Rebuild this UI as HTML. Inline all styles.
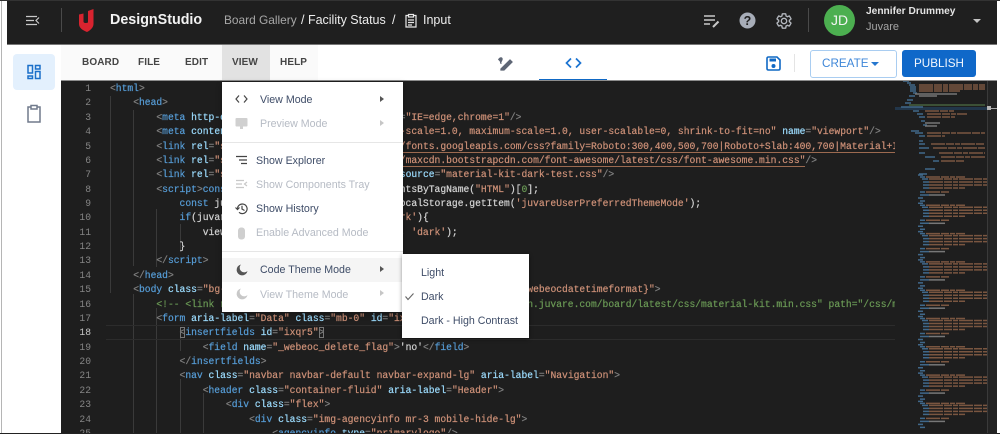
<!DOCTYPE html>
<html><head><meta charset="utf-8">
<style>
html,body{margin:0;padding:0;background:#fff;height:434px;overflow:hidden}
body{width:1000px;position:relative;font-family:"Liberation Sans",sans-serif}
.a{position:absolute;white-space:nowrap}
#code{position:absolute;left:61px;top:81px;width:936px;height:352px;background:#1e1e1e;overflow:hidden}
.l{position:absolute;left:49px;width:785px;height:14px;overflow:hidden;font:9.67px/14px "Liberation Mono",monospace;color:#d4d4d4;white-space:pre;-webkit-text-stroke:.2px currentColor}
.n{position:absolute;left:0;width:30px;height:14px;overflow:hidden;text-align:right;font:9.67px/14px "Liberation Mono",monospace;color:#858585}
.g{color:#808080}.t{color:#569cd6}.p{color:#9cdcfe}.s{color:#ce9178}.c{color:#6a9955}.k{color:#569cd6}
.u{border-bottom:1px solid #9c6a50}
.gd{position:absolute;width:1px;background:#3a3a3a}
.m{position:absolute;font-size:10.65px;color:#3f4d68;white-space:nowrap}
.d{color:#b6bbc4}
.tb{position:absolute;top:57px;font-size:10px;font-weight:bold;color:#454545;letter-spacing:.1px}
.tri{position:absolute;width:0;height:0;border-left:4px solid #555;border-top:3.5px solid transparent;border-bottom:3.5px solid transparent}
</style></head><body>

<div class="a" style="left:1px;top:0;width:1px;height:434px;background:#b5b5b5"></div>
<div class="a" style="left:7px;top:0;width:990px;height:44px;background:#1f1f1f"></div>
<div class="a" style="left:0;top:0;width:1000px;height:1px;background:#333"></div>
<div class="a" style="left:7px;top:44px;width:990px;height:1px;background:#777"></div>

<svg class="a" style="left:25px;top:14px" width="15" height="13" viewBox="0 0 15 13"><path d="M1 2.500H12M1 6.500H9M1 10.500H12M14 3.500L11 6.500L14 9.500" fill="none" stroke="#c9c9c9" stroke-width="1.200"/></svg>
<div class="a" style="left:61px;top:8px;width:1px;height:24px;background:#4a4a4a"></div>
<svg class="a" style="left:78px;top:8px" width="17" height="25" viewBox="0 0 17 25"><path d="M1 6.500L5.500 5.500V14C6 15 8 15.500 10 14.500V3L15.500 1V16C15.500 19 13 22 9 24C5 22.500 1 20 1 16Z" fill="#d8232f"/></svg>
<div class="a" style="left:110px;top:12px;font-size:14.3px;font-weight:bold;color:#f2f2f2">DesignStudio</div>
<div class="a" style="left:224px;top:13px;font-size:11.9px;color:#a8a8a8">Board Gallery</div>
<div class="a" style="left:301px;top:13px;font-size:12.5px;color:#ededed">/ Facility Status</div>
<div class="a" style="left:392px;top:13px;font-size:12.5px;color:#ededed">/</div>
<svg class="a" style="left:404px;top:13px" width="14" height="15" viewBox="0 0 14 15"><path d="M4.500 2.500H2V14H12V2.500H9.500M4.500 1.500H9.500V4H4.500ZM4 7H10M4 9.500H10M4 12H8" fill="none" stroke="#e8e8e8" stroke-width="1.200"/></svg>
<div class="a" style="left:423px;top:13px;font-size:12.5px;color:#ededed">Input</div>

<svg class="a" style="left:703px;top:14px" width="17" height="14" viewBox="0 0 17 14"><path d="M1 2H12M1 6H12M1 10H7" stroke="#c8c8c8" stroke-width="1.400"/><path d="M10 13L15.500 7.500" stroke="#c8c8c8" stroke-width="2"/></svg>
<svg class="a" style="left:739px;top:12px" width="17" height="17" viewBox="0 0 17 17"><circle cx="8.500" cy="8.500" r="8" fill="#a7adb8"/><text x="8.500" y="13" font-family="Liberation Sans" font-size="12.500" font-weight="bold" text-anchor="middle" fill="#1f1f1f">?</text></svg>
<svg class="a" style="left:775px;top:12px" width="18" height="18" viewBox="0 0 24 24"><path d="M19.140 12.940c.04-.3.06-.61.06-.94 0-.32-.02-.64-.07-.94l2.030-1.580c.18-.14.23-.41.12-.61l-1.920-3.320c-.12-.22-.37-.29-.59-.22l-2.390.96c-.5-.38-1.030-.7-1.620-.94l-.36-2.540c-.04-.24-.24-.41-.48-.41h-3.840c-.24 0-.43.17-.47.41l-.36 2.540c-.59.24-1.130.57-1.620.94l-2.390-.96c-.22-.08-.47 0-.59.22L2.740 8.870c-.12.21-.08.47.12.61l2.030 1.580c-.05.3-.09.63-.09.94s.02.64.07.94l-2.030 1.580c-.18.14-.23.41-.12.61l1.920 3.320c.12.22.37.29.59.22l2.390-.96c.5.38 1.030.7 1.620.94l.36 2.540c.05.24.24.41.48.41h3.840c.24 0 .44-.17.47-.41l.36-2.540c.59-.24 1.130-.56 1.620-.94l2.390.96c.22.08.47 0 .59-.22l1.920-3.320c.12-.22.07-.47-.12-.61l-2.010-1.580zM12 15.600c-1.980 0-3.600-1.620-3.600-3.600s1.620-3.600 3.600-3.600 3.600 1.620 3.600 3.600-1.620 3.600-3.600 3.600z" fill="none" stroke="#b4b8bf" stroke-width="1.800"/></svg>
<div class="a" style="left:808px;top:8px;width:1px;height:24px;background:#4a4a4a"></div>
<div class="a" style="left:824px;top:5px;width:31px;height:31px;border-radius:50%;background:#4caf50;color:#f4f4f4;font-size:14px;line-height:31px;text-align:center">JD</div>
<div class="a" style="left:866px;top:6px;font-size:10.2px;font-weight:bold;color:#e4e4e4">Jennifer Drummey</div>
<div class="a" style="left:866px;top:21px;font-size:11px;color:#a5a5a5">Juvare</div>
<div class="a" style="left:973px;top:19px;width:0;height:0;border-top:4px solid #c4c4c4;border-left:4px solid transparent;border-right:4px solid transparent"></div>

<div class="a" style="left:13px;top:54px;width:42px;height:36px;border-radius:4px;background:#e3f0fd"></div>
<svg class="a" style="left:26px;top:64px" width="16" height="16" viewBox="0 0 16 16"><path d="M2 1.500H6.500V9H2ZM9.500 1.500H14V5H9.500ZM2 12H6.500V14.500H2ZM9.500 7.500H14V14.500H9.500Z" fill="none" stroke="#1a6fc9" stroke-width="1.500"/></svg>
<svg class="a" style="left:26px;top:104px" width="16" height="19" viewBox="0 0 16 19"><path d="M4.500 3H2V18H14V3H11.500M5 1.500H11V5H5Z" fill="none" stroke="#707a8c" stroke-width="1.500"/></svg>

<div class="a" style="left:61px;top:45px;width:936px;height:36px;background:#fff"></div>
<div class="a" style="left:61px;top:45px;width:257px;height:36px;background:#fafafa"></div>
<div class="a" style="left:222px;top:45px;width:48px;height:36px;background:#e2e2e2"></div>
<div class="tb" style="left:82px">BOARD</div>
<div class="tb" style="left:138px">FILE</div>
<div class="tb" style="left:185px">EDIT</div>
<div class="tb" style="left:232px">VIEW</div>
<div class="tb" style="left:280px">HELP</div>
<svg class="a" style="left:497px;top:56px" width="16" height="15" viewBox="0 0 16 15"><path d="M4 13L13 4L15 6L7 14H4ZM1.500 4C3 1 5.500 1.500 5 3.500S2.500 7 4.500 7.500" fill="#5e6675" stroke="#5e6675" stroke-width="1.300"/></svg>
<svg class="a" style="left:565px;top:57px" width="17" height="12" viewBox="0 0 17 12"><path d="M6 1.500L1.500 6L6 10.500M11 1.500L15.500 6L11 10.500" fill="none" stroke="#1a73d1" stroke-width="1.700"/></svg>
<div class="a" style="left:539px;top:79px;width:68px;height:2px;background:#0f68c4"></div>
<svg class="a" style="left:766px;top:56px" width="15" height="15" viewBox="0 0 15 15"><path d="M1 2.500C1 1.500 1.500 1 2.500 1H11L14 4V12.500C14 13.500 13.500 14 12.500 14H2.500C1.500 14 1 13.500 1 12.500Z" fill="none" stroke="#0f68c4" stroke-width="1.600"/><path d="M3.500 2.500H10V5.500H3.500Z" fill="#0f68c4"/><circle cx="7.500" cy="10" r="2" fill="#0f68c4"/></svg>
<div class="a" style="left:794px;top:54px;width:1px;height:18px;background:#e4e4e4"></div>
<div class="a" style="left:810px;top:50px;width:85px;height:26px;border:1px solid #a9cdf1;border-radius:3px;background:#fff"></div>
<div class="a" style="left:822px;top:57px;font-size:11.7px;color:#3f87d8">CREATE</div>
<div class="a" style="left:871px;top:62px;width:0;height:0;border-top:4px solid #2577cf;border-left:4px solid transparent;border-right:4px solid transparent"></div>
<div class="a" style="left:902px;top:50px;width:74px;height:27px;border-radius:3px;background:#0f68c9;color:#f2f7fd;font-size:11.7px;line-height:27px;text-align:center">PUBLISH</div>
<div class="a" style="left:61px;top:80px;width:936px;height:1px;background:#8d8d8d"></div>

<div id="code">
<div class="gd" style="left:49px;top:15px;height:197px"></div>
<div class="gd" style="left:72px;top:29px;height:156px"></div>
<div class="gd" style="left:72px;top:213px;height:139px"></div>
<div class="gd" style="left:95px;top:128px;height:58px"></div>
<div class="gd" style="left:95px;top:227px;height:125px"></div>
<div class="gd" style="left:119px;top:143px;height:28px"></div>
<div class="gd" style="left:119px;top:256px;height:14px"></div>
<div class="gd" style="left:119px;top:298px;height:54px"></div>
<div class="gd" style="left:142px;top:312px;height:40px"></div>
<div class="a" style="left:45px;top:244px;width:789px;height:13px;border-top:1px solid #2c2c2c;border-bottom:1px solid #2c2c2c"></div>

<div class="n" style="top:1px">1</div><div class="n" style="top:15.4px">2</div><div class="n" style="top:29.7px">3</div><div class="n" style="top:44.1px">4</div><div class="n" style="top:58.5px">5</div><div class="n" style="top:72.9px">6</div><div class="n" style="top:87.2px">7</div><div class="n" style="top:101.6px">8</div><div class="n" style="top:116px">9</div><div class="n" style="top:130.3px">10</div><div class="n" style="top:144.7px">11</div><div class="n" style="top:159.1px">12</div><div class="n" style="top:173.4px">13</div><div class="n" style="top:187.8px">14</div><div class="n" style="top:202.2px">15</div><div class="n" style="top:216.6px">16</div><div class="n" style="top:230.9px">17</div><div class="n" style="top:245.3px;color:#c6c6c6">18</div><div class="n" style="top:259.7px">19</div><div class="n" style="top:274px">20</div><div class="n" style="top:288.4px">21</div><div class="n" style="top:302.8px">22</div><div class="n" style="top:317.1px">23</div><div class="n" style="top:331.5px">24</div>

<div class="l" style="top:1px"><span class="g">&lt;</span><span class="t">html</span><span class="g">&gt;</span></div>
<div class="l" style="top:15.4px">    <span class="g">&lt;</span><span class="t">head</span><span class="g">&gt;</span></div>
<div class="l" style="top:29.7px">        <span class="g">&lt;</span><span class="t">meta</span> <span class="p">http-equiv</span><span class="g">=</span><span class="s">"X-UA-Compatible"</span> <span class="p">content</span><span class="g">=</span><span class="s">"IE=edge,chrome=1"</span><span class="g">/&gt;</span></div>
<div class="l" style="top:44.1px">        <span class="g">&lt;</span><span class="t">meta</span> <span class="p">content</span><span class="g">=</span><span class="s">"width=device-width, initial-scale=1.0, maximum-scale=1.0, user-scalable=0, shrink-to-fit=no"</span> <span class="p">name</span><span class="g">=</span><span class="s">"viewport"</span><span class="g">/&gt;</span></div>
<div class="l" style="top:58.5px">        <span class="g">&lt;</span><span class="t">link</span> <span class="p">rel</span><span class="g">=</span><span class="s">"stylesheet"</span> <span class="p">source</span><span class="g">=</span><span class="s u">"https://////fonts.googleapis.com/css?family=Roboto:300,400,500,700|Roboto+Slab:400,700|Material+Icons"</span></div>
<div class="l" style="top:72.9px">        <span class="g">&lt;</span><span class="t">link</span> <span class="p">rel</span><span class="g">=</span><span class="s">"stylesheet"</span> <span class="p">source</span><span class="g">=</span><span class="s u">"https://////maxcdn.bootstrapcdn.com/font-awesome/latest/css/font-awesome.min.css"</span><span class="g">/&gt;</span></div>
<div class="l" style="top:87.2px">        <span class="g">&lt;</span><span class="t">link</span> <span class="p">rel</span><span class="g">=</span><span class="s">"stylesheet"</span>                    <span class="p">source</span><span class="g">=</span><span class="s">"material-kit-dark-test.css"</span><span class="g">/&gt;</span></div>
<div class="l" style="top:101.6px">        <span class="g">&lt;</span><span class="t">script</span><span class="g">&gt;</span><span class="k">const</span> htmlElem = document.getElementsByTagName(<span class="s">"HTML"</span>)[<span class="c">0</span>];</div>
<div class="l" style="top:116px">            <span class="k">const</span> juvareUserPreferredThemeMode = localStorage.getItem(<span class="s">'juvareUserPreferredThemeMode'</span>);</div>
<div class="l" style="top:130.3px">            <span class="k">if</span>(juvareUserPreferredThemeMode == <span class="s">'dark'</span>){</div>
<div class="l" style="top:144.7px">                viewElem.setAttribute(<span class="s">'data-theme'</span>, <span class="s">'dark'</span>);</div>
<div class="l" style="top:159.1px">            }</div>
<div class="l" style="top:173.4px">        <span class="g">&lt;/</span><span class="t">script</span><span class="g">&gt;</span></div>
<div class="l" style="top:187.8px">    <span class="g">&lt;/</span><span class="t">head</span><span class="g">&gt;</span></div>
<div class="l" style="top:202.2px">    <span class="g">&lt;</span><span class="t">body</span> <span class="p">class</span><span class="g">=</span><span class="s">"bg-dark"</span> <span class="p">data-format</span><span class="g">=</span><span class="s">"{webeoc-date-time-format-value-v_webeocdatetimeformat}"</span><span class="g">&gt;</span></div>
<div class="l" style="top:216.6px">        <span class="c">&lt;!-- &lt;link rel="stylesheet" type="text/css"     href="https://cdn.juvare.com/board/latest/css/material-kit.min.css" path="/css/material-kit.min.css"/&gt; --&gt;</span></div>
<div class="l" style="top:230.9px">        <span class="g">&lt;</span><span class="t">form</span> <span class="p">aria-label</span><span class="g">=</span><span class="s">"Data"</span> <span class="p">class</span><span class="g">=</span><span class="s">"mb-0"</span> <span class="p">id</span><span class="g">=</span><span class="s">"ixqr4"</span><span class="g">&gt;</span></div>
<div class="l" style="top:245.3px">            <span class="g" style="outline:1px solid #777;outline-offset:-1px">&lt;</span><span class="t">insertfields</span> <span class="p">id</span><span class="g">=</span><span class="s">"ixqr5"</span><span class="g" style="outline:1px solid #777;outline-offset:-1px">&gt;</span></div>
<div class="l" style="top:259.7px">                <span class="g">&lt;</span><span class="t">field</span> <span class="p">name</span><span class="g">=</span><span class="s">"_webeoc_delete_flag"</span><span class="g">&gt;</span>'no'<span class="g">&lt;/</span><span class="t">field</span><span class="g">&gt;</span></div>
<div class="l" style="top:274px">            <span class="g">&lt;/</span><span class="t">insertfields</span><span class="g">&gt;</span></div>
<div class="l" style="top:288.4px">            <span class="g">&lt;</span><span class="t">nav</span> <span class="p">class</span><span class="g">=</span><span class="s">"navbar navbar-default navbar-expand-lg"</span> <span class="p">aria-label</span><span class="g">=</span><span class="s">"Navigation"</span><span class="g">&gt;</span></div>
<div class="l" style="top:302.8px">                <span class="g">&lt;</span><span class="t">header</span> <span class="p">class</span><span class="g">=</span><span class="s">"container-fluid"</span> <span class="p">aria-label</span><span class="g">=</span><span class="s">"Header"</span><span class="g">&gt;</span></div>
<div class="l" style="top:317.1px">                    <span class="g">&lt;</span><span class="t">div</span> <span class="p">class</span><span class="g">=</span><span class="s">"flex"</span><span class="g">&gt;</span></div>
<div class="l" style="top:331.5px">                        <span class="g">&lt;</span><span class="t">div</span> <span class="p">class</span><span class="g">=</span><span class="s">"img-agencyinfo mr-3 mobile-hide-lg"</span><span class="g">&gt;</span></div>
<div class="a" style="left:0;top:345.9px;width:834px;height:6.1px;overflow:hidden">
<div class="n" style="top:0">25</div>
<div class="l" style="top:0">                            <span class="g">&lt;</span><span class="t">agencyinfo</span> <span class="p">type</span><span class="g">=</span><span class="s">"primarylogo"</span><span class="g">/&gt;</span></div>
</div>

<svg class="a" style="left:834px;top:0;overflow:hidden" width="102" height="352" viewBox="0 0 102 352">
<defs>
<filter id="bl" x="-5%" y="-5%" width="110%" height="110%"><feGaussianBlur stdDeviation="0.35"/></filter>
<g id="mb" fill="none" stroke-width="1.500">
<path d="M23 0H28M25 2H30M27 4H33M28 7H34M28 10H34M28 13H34M25 17H30M25 20H34M23 23H28M25 26H30" stroke="#40688a"/>
<path d="M31 2H70M34 4H92M34 7H92M34 10H92M34 13H70M31 17H55" stroke="#7a5640" stroke-dasharray="14 1 8 1 5 1"/>
<path d="M34 20H50" stroke="#777"/>
</g>
</defs>
<rect x="0" y="26" width="92" height="3" fill="#22364a"/>
<rect x="92" y="0" width="10" height="352" fill="#232323"/>
<rect x="92" y="0" width="1" height="352" fill="#3a3a3a"/>
<g filter="url(#bl)">
<g fill="none" stroke-width="1.500">
<path d="M8 0H14M12 2H16M14 4H20M15 6H21M15 8H21M15 10H21M18 12H22M14 15H20M12 19H18M10 22H16M6 26H28M18 30H24M22 33H28M24 36H30M26 40H30M28 44H32M16 50H24M20 52H28M24 55H30M24 60H28M24 63H30M24 67H34M24 72H30M30 76H40M38 80H44M30 88H40M24 93H32" stroke="#40688a"/>
<path d="M24 4H90M24 6H90M24 8H90M24 10H65M30 30H60M32 33H72M32 36H60M32 52H90M32 55H50M36 63H90M38 67H90M44 72H90M46 76H90M46 80H70" stroke="#7a5640" stroke-dasharray="14 1 8 1 5 1"/>
<path d="M20 13H62M24 15H42M30 42H45M30 45H42" stroke="#777"/>
<path d="M14 24H90" stroke="#47603d"/>
</g>
<use href="#mb" y="94"/><use href="#mb" y="122.300"/><use href="#mb" y="150.600"/><use href="#mb" y="178.900"/><use href="#mb" y="207.200"/><use href="#mb" y="235.500"/><use href="#mb" y="263.800"/><use href="#mb" y="292.100"/><use href="#mb" y="320.400"/>
</g>
<rect x="96" y="27" width="6" height="1" fill="#aaa"/>
<rect x="92" y="25" width="4" height="4" fill="#b5b5b5"/>
</svg>
</div>

<div class="a" style="left:222px;top:82px;width:181px;height:230px;background:#fff;box-shadow:0 2px 6px rgba(0,0,0,.3)"></div>
<div class="a" style="left:222px;top:142px;width:181px;height:1px;background:#e6e6e6"></div>
<div class="a" style="left:222px;top:251px;width:181px;height:1px;background:#e6e6e6"></div>
<div class="a" style="left:222px;top:258px;width:181px;height:24px;background:#f5f5f5"></div>

<svg class="a" style="left:235px;top:94px" width="13" height="10" viewBox="0 0 13 10"><path d="M4 1.500L1 5L4 8.500M9 1.500L12 5L9 8.500" fill="none" stroke="#444" stroke-width="1.200"/></svg>
<div class="m" style="left:260px;top:94px">View Mode</div>
<div class="tri" style="left:380px;top:96px"></div>
<svg class="a" style="left:235px;top:118px" width="13" height="12" viewBox="0 0 13 12"><rect x="0.500" y="0" width="12" height="8.500" rx="1" fill="#d0d0d0"/><rect x="5" y="8.500" width="3" height="2.500" fill="#d0d0d0"/></svg>
<div class="m d" style="left:260px;top:118px">Preview Mode</div>
<div class="tri" style="left:380px;top:120px;border-left-color:#c6c6c6"></div>

<svg class="a" style="left:235px;top:155px" width="13" height="11" viewBox="0 0 13 11"><path d="M1 1.500H12M4 5H12M6 8.500H12" stroke="#444" stroke-width="1.300"/></svg>
<div class="m" style="left:256px;top:155px">Show Explorer</div>
<svg class="a" style="left:235px;top:179px" width="13" height="11" viewBox="0 0 13 11"><path d="M1 1.500H9M1 5H7M1 8.500H9M12 3L9.500 5L12 7" fill="none" stroke="#c8c8c8" stroke-width="1.200"/></svg>
<div class="m d" style="left:256px;top:179px">Show Components Tray</div>
<svg class="a" style="left:235px;top:202px" width="13" height="13" viewBox="0 0 13 13"><path d="M2.500 6.500A4.800 4.800 0 1 1 4 10.300M0.500 5.500L2.500 7.500L4.500 5.500M7 3.800V7L9.500 8.500" fill="none" stroke="#444" stroke-width="1.200"/></svg>
<div class="m" style="left:256px;top:203px">Show History</div>
<svg class="a" style="left:236px;top:226px" width="11" height="14" viewBox="0 0 11 14"><path d="M2 5C2 2 4 1.500 5.500 1.500S9 2 9 5V10C9 12.500 7.500 13.500 5.500 13.500S2 12.500 2 10Z" fill="#cfcfcf"/></svg>
<div class="m d" style="left:256px;top:227px">Enable Advanced Mode</div>

<svg class="a" style="left:236px;top:264px" width="12" height="12" viewBox="0 0 12 12"><path d="M5 .5A5.500 5.500 0 1 0 11.500 7A4.500 4.500 0 0 1 5 .5Z" fill="#555"/></svg>
<div class="m" style="left:260px;top:264px">Code Theme Mode</div>
<div class="tri" style="left:380px;top:266px"></div>
<svg class="a" style="left:236px;top:288px" width="12" height="12" viewBox="0 0 12 12"><path d="M5 .5A5.500 5.500 0 1 0 11.500 7A4.500 4.500 0 0 1 5 .5Z" fill="#c8c8c8"/></svg>
<div class="m d" style="left:260px;top:289px">View Theme Mode</div>
<div class="tri" style="left:380px;top:290px;border-left-color:#c6c6c6"></div>

<div class="a" style="left:402px;top:254px;width:127px;height:84px;background:#fff;box-shadow:0 1px 4px rgba(0,0,0,.4)"></div>
<div class="m" style="left:421px;top:267px">Light</div>
<svg class="a" style="left:404px;top:292px" width="11" height="9" viewBox="0 0 11 9"><path d="M1.500 4.500L4 7.500L9.500 1.500" fill="none" stroke="#666" stroke-width="1.100"/></svg>
<div class="m" style="left:421px;top:291px">Dark</div>
<div class="m" style="left:421px;top:315px">Dark - High Contrast</div>

<div class="a" style="left:0;top:433px;width:1000px;height:1px;background:#222"></div>
</body></html>
